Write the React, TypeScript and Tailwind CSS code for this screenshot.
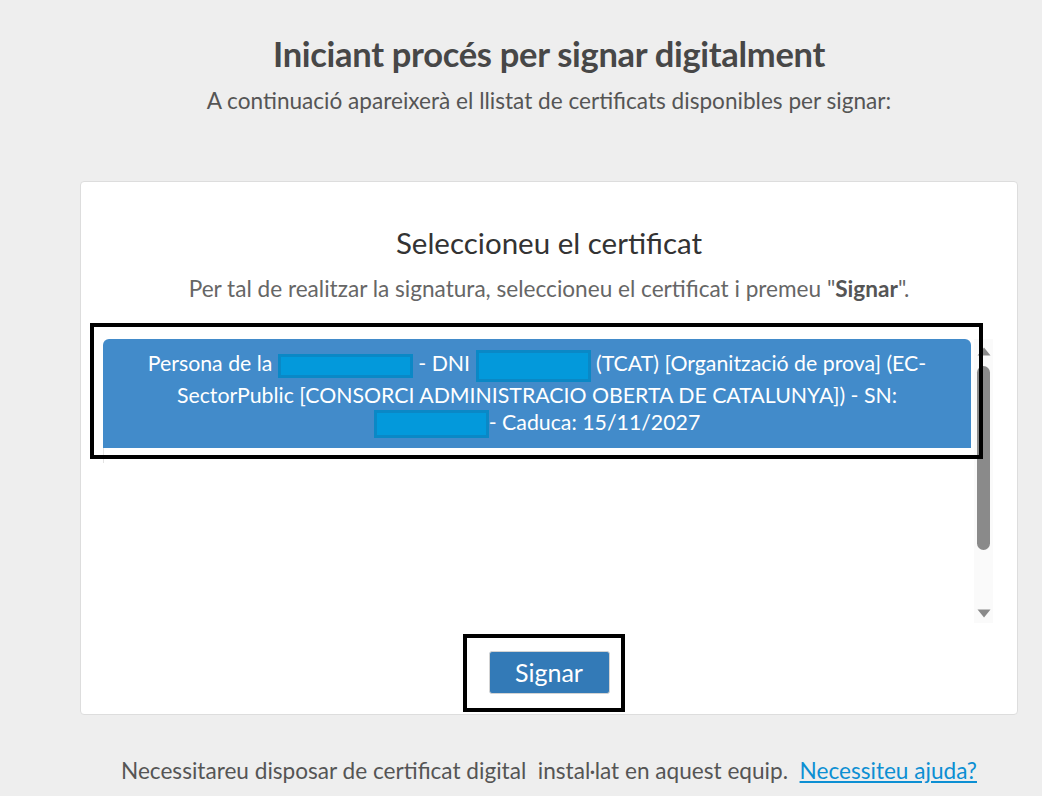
import React from 'react';

// inline redaction block used to hide personal data in the certificate label
const Masked = ({ w, h = 'h-[24px]' }: { w: string; h?: string }) => (
  <span className={`inline-block ${w} ${h} align-middle bg-[#0399db] border-[3px] border-[#0a88c6]`} />
);

export default function App() {
  return (
    <div className="min-h-[796px] w-full bg-[#eeeeee] text-[#555] font-['Lato','Open_Sans',sans-serif]">
      <div className="flex flex-col items-center pt-[34px] pl-[56px]">
        <h1 className="text-[34.5px] leading-[40px] font-bold text-[#474747] tracking-[-0.3px]">Iniciant procés per signar digitalment</h1>
        <p className="mt-[13px] text-[22.6px] leading-[28px] text-[#555]">A continuació apareixerà el llistat de certificats disponibles per signar:</p>
      </div>

      <div className="mx-[80px] mt-[66px] w-[938px] h-[534px] bg-white border border-[#dddddd] rounded-[4px] flex flex-col items-center relative">
        <h2 className="mt-[42px] text-[29.5px] leading-[38px] text-[#333]">Seleccioneu el certificat</h2>
        <p className="mt-[13px] text-[22.6px] leading-[28px] text-[#666]">
          Per tal de realitzar la signatura, seleccioneu el certificat i premeu "<b className="text-[#555]">Signar</b>".
        </p>

        {/* certificate list */}
        <div className="mt-[36px] self-start ml-[22px] w-[890px] h-[284px] flex">
          <div className="flex-1 flex flex-col">
            <div className="bg-[#428bca] rounded-t-[6px] h-[109px] flex flex-col items-center justify-center text-white text-[21.3px] leading-[27px] pt-[1px]">
              <div>
                Persona de la <Masked w="w-[135px]" /> - DNI <Masked w="w-[115px]" h="h-[32px]" /> (TCAT) [Organització de prova] (EC-
              </div>
              <div>SectorPublic [CONSORCI ADMINISTRACIO OBERTA DE CATALUNYA]) - SN:</div>
              <div>
                <Masked w="w-[115px]" h="h-[28px]" />- Caduca: 15/11/2027
              </div>
            </div>
            <div className="w-px h-[15px] bg-[#e3e3e3]" />
          </div>
          {/* scrollbar */}
          <div className="w-[19px] ml-[3px] h-[284px] bg-[#fafafa] flex flex-col items-center">
            <svg width="14" height="9" viewBox="0 0 14 9" className="mt-[8px]"><path d="M7 0.5 L13.5 8.5 L0.5 8.5 Z" fill="#8a8a8a" /></svg>
            <div className="mt-[10px] w-[13px] h-[184px] rounded-full bg-[#8a8a8a]" />
            <div className="flex-1" />
            <svg width="14" height="9" viewBox="0 0 14 9" className="mb-[5px]"><path d="M0.5 0.5 L13.5 0.5 L7 8.5 Z" fill="#8a8a8a" /></svg>
          </div>
        </div>

        <div className="mt-[28px] w-[121px] h-[43px] rounded-[3px] bg-[#337ab7] border border-[#d3d3d3] text-white text-[25px] flex items-center justify-center">Signar</div>

        {/* highlight frames */}
        <div className="absolute left-[9px] top-[141px] w-[893px] h-[136px] border-[4px] border-black pointer-events-none" />
        <div className="absolute left-[382px] top-[452px] w-[162px] h-[78px] border-[4px] border-black pointer-events-none" />
      </div>

      <p className="mt-[42px] text-center text-[22.6px] leading-[28px] text-[#555] pl-[56px]">
        Necessitareu disposar de certificat digital&nbsp; instal·lat en aquest equip.&nbsp;{' '}
        <a href="#" className="text-[#0c8fd3] underline">Necessiteu ajuda?</a>
      </p>
    </div>
  );
}
